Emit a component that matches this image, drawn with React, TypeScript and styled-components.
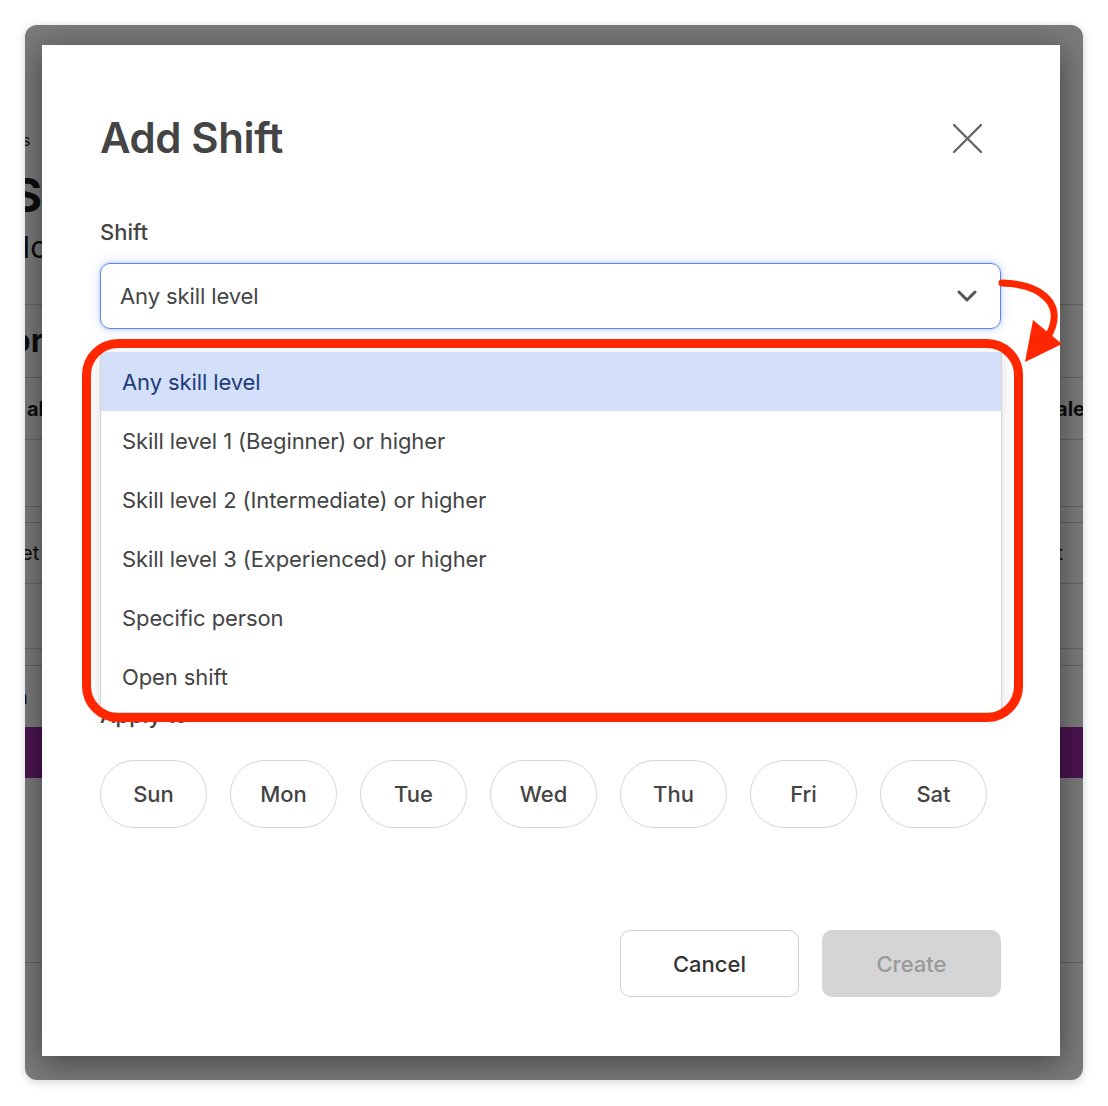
import React from "react";
import styled, { createGlobalStyle } from "styled-components";

const Global = createGlobalStyle`
  html, body { margin: 0; padding: 0; background: #ffffff; }
  body { font-family: Inter, "Noto Sans", "Liberation Sans", sans-serif; }
  * { box-sizing: border-box; }
`;

const Page = styled.div`
  padding: 25px 25px 26px 25px;
`;

const Window = styled.div`
  position: relative;
  height: 1055px;
  border-radius: 12px;
  overflow: hidden;
  background: #ffffff;
  box-shadow: 0 2px 10px rgba(0, 0, 0, 0.18);
`;

/* ---------- dimmed app behind the dialog ---------- */

const AppBehind = styled.div`
  display: flex;
  flex-direction: column;
  color: #1c1c1c;
`;

const BgRow = styled.div<{ $h: number; $line?: boolean; $fill?: string }>`
  display: flex;
  align-items: center;
  height: ${(p) => p.$h}px;
  flex-shrink: 0;
  white-space: nowrap;
  background: ${(p) => p.$fill ?? "transparent"};
  border-bottom: ${(p) => (p.$line ? "1px solid #cfcfcf" : "none")};
`;

const Peek = styled.span<{ $size: number; $bold?: boolean; $shift: number }>`
  font-size: ${(p) => p.$size}px;
  font-weight: ${(p) => (p.$bold ? 700 : 400)};
  margin-left: ${(p) => p.$shift}px;
  line-height: 1;
`;

const PeekRight = styled(Peek)<{ $end: number }>`
  margin-left: auto;
  margin-right: ${(p) => p.$end}px;
`;

/* ---------- overlay + dialog ---------- */

const Overlay = styled.div`
  position: absolute;
  inset: 0;
  background: rgba(0, 0, 0, 0.52);
  display: flex;
  padding: 20px 23px 24px 17px;
`;

const Modal = styled.div`
  position: relative;
  flex: 1;
  background: #ffffff;
  box-shadow: 0 6px 30px rgba(0, 0, 0, 0.45);
  padding: 68px 59px 59px 58px;
  display: flex;
  flex-direction: column;
  color: #444444;
`;

const Header = styled.div`
  display: flex;
  align-items: center;
  justify-content: space-between;
  height: 50px;
`;

const Title = styled.h1`
  margin: 0;
  font-size: 42px;
  font-weight: 600;
  line-height: 50px;
  letter-spacing: -0.4px;
  color: #444444;
`;

const CloseButton = styled.button`
  width: 40px;
  height: 40px;
  margin-right: 14px;
  border: none;
  background: transparent;
  padding: 0;
  display: flex;
  align-items: center;
  justify-content: center;
  cursor: pointer;
`;

const Label = styled.div<{ $top: number }>`
  margin-top: ${(p) => p.$top}px;
  font-size: 22px;
  font-weight: 500;
  line-height: 28px;
  color: #444444;
`;

const SelectWrap = styled.div`
  position: relative;
  margin-top: 17px;
`;

const SelectBox = styled.div`
  height: 66px;
  border: 1px solid #5581fb;
  border-radius: 10px;
  box-shadow: 0 0 0 2px rgba(85, 129, 251, 0.1), 0 0 12px rgba(85, 129, 251, 0.28);
  display: flex;
  align-items: center;
  justify-content: space-between;
  padding: 0 23px 0 19px;
  font-size: 22px;
  letter-spacing: -0.1px;
  color: #454545;
`;

const Menu = styled.div`
  position: absolute;
  top: 89px;
  left: 0;
  width: 902px;
  background: #ffffff;
  border: 1px solid #d4d4d4;
  border-top: none;
  box-shadow: 0 4px 14px rgba(0, 0, 0, 0.14);
  padding-bottom: 6px;
  z-index: 2;
`;

const MenuItem = styled.div<{ $selected?: boolean }>`
  height: 59px;
  display: flex;
  align-items: center;
  padding-left: 21px;
  font-size: 22px;
  letter-spacing: -0.1px;
  color: ${(p) => (p.$selected ? "#1d3b78" : "#444444")};
  background: ${(p) => (p.$selected ? "#d4e0fa" : "transparent")};
`;

const Highlight = styled.div`
  position: absolute;
  left: -18px;
  top: 76px;
  width: 941px;
  height: 383px;
  border: 9px solid #ff2600;
  border-radius: 36px;
  z-index: 3;
  pointer-events: none;
`;

const Arrow = styled.svg`
  position: absolute;
  left: 895px;
  top: 7px;
  z-index: 3;
  overflow: visible;
`;

const HiddenField = styled.div`
  margin-top: 40px;
  display: flex;
  flex-direction: column;
  gap: 17px;
`;

const InputRow = styled.div`
  display: flex;
  gap: 23px;
`;

const Input = styled.div`
  flex: 1 0 auto;
  min-width: 0;
  height: 66px;
  border: 1px solid #cccccc;
  border-radius: 10px;
`;

const Days = styled.div`
  margin-top: 31px;
  display: flex;
  gap: 23px;
`;

const DayPill = styled.button`
  width: 107px;
  height: 68px;
  border: 1px solid #d6d6d6;
  border-radius: 34px;
  background: #ffffff;
  font-family: inherit;
  font-size: 22px;
  font-weight: 500;
  color: #444444;
  padding: 0;
`;

const Actions = styled.div`
  margin-top: 102px;
  display: flex;
  justify-content: flex-end;
  gap: 23px;
`;

const ActionButton = styled.button<{ $primary?: boolean }>`
  width: 179px;
  height: 67px;
  border-radius: 10px;
  border: ${(p) => (p.$primary ? "none" : "1px solid #cfcfcf")};
  background: ${(p) => (p.$primary ? "#d5d5d5" : "#ffffff")};
  color: ${(p) => (p.$primary ? "#999999" : "#333333")};
  font-family: inherit;
  font-size: 22px;
  font-weight: 500;
  padding: 0;
`;

const options = [
  "Any skill level",
  "Skill level 1 (Beginner) or higher",
  "Skill level 2 (Intermediate) or higher",
  "Skill level 3 (Experienced) or higher",
  "Specific person",
  "Open shift",
];

const days = ["Sun", "Mon", "Tue", "Wed", "Thu", "Fri", "Sat"];

export default function App() {
  return (
    <>
      <Global />
      <Page>
        <Window>
          <AppBehind>
            <BgRow $h={104} />
            <BgRow $h={22}>
              <Peek $size={16} $shift={-3}>s</Peek>
            </BgRow>
            <BgRow $h={20} />
            <BgRow $h={48}>
              <Peek $size={46} $bold $shift={-13}>S</Peek>
            </BgRow>
            <BgRow $h={2} />
            <BgRow $h={52}>
              <Peek $size={30} $shift={-17}>Ho</Peek>
            </BgRow>
            <BgRow $h={32} $line />
            <BgRow $h={73} $line>
              <Peek $size={32} $bold $shift={-14}>or</Peek>
            </BgRow>
            <BgRow $h={62} $line>
              <Peek $size={20} $bold $shift={2}>al</Peek>
              <PeekRight $size={20} $bold $shift={0} $end={-2}>ale</PeekRight>
            </BgRow>
            <BgRow $h={67} $line />
            <BgRow $h={16} $line />
            <BgRow $h={61} $line>
              <Peek $size={20} $shift={-4}>et</Peek>
              <PeekRight $size={20} $shift={0} $end={20}>t</PeekRight>
            </BgRow>
            <BgRow $h={65} $line />
            <BgRow $h={17} $line />
            <BgRow $h={61}>
              <Peek $size={20} $shift={-9}>n</Peek>
            </BgRow>
            <BgRow $h={51} $fill="#9b2ba8" />
            <BgRow $h={185} $line />
          </AppBehind>

          <Overlay>
            <Modal>
              <Header>
                <Title>Add Shift</Title>
                <CloseButton aria-label="Close">
                  <svg width="29" height="29" viewBox="0 0 29 29">
                    <path d="M1 1 L28 28 M28 1 L1 28" stroke="#666666" strokeWidth="2.4" strokeLinecap="round" />
                  </svg>
                </CloseButton>
              </Header>

              <Label $top={55}>Shift</Label>
              <SelectWrap>
                <SelectBox>
                  <span>Any skill level</span>
                  <svg width="20" height="12" viewBox="0 0 20 12">
                    <path d="M2 2 L10 10 L18 2" fill="none" stroke="#555555" strokeWidth="3" strokeLinecap="round" strokeLinejoin="round" />
                  </svg>
                </SelectBox>

                <Menu>
                  {options.map((o, i) => (
                    <MenuItem key={o} $selected={i === 0}>
                      {o}
                    </MenuItem>
                  ))}
                </Menu>

                <Highlight />
                <Arrow width="75" height="100" viewBox="0 0 75 100">
                  <path d="M7 13 C 48 14, 72 36, 52 68" fill="none" stroke="#ff2600" strokeWidth="7" strokeLinecap="round" />
                  <polygon points="38,50 67,74 30,92" fill="#ff2600" />
                </Arrow>
              </SelectWrap>

              <HiddenField>
                <Label $top={0}>Time</Label>
                <InputRow>
                  <Input />
                  <Input />
                </InputRow>
              </HiddenField>
              <HiddenField>
                <Label $top={0}>Break</Label>
                <Input />
              </HiddenField>

              <Label $top={70}>Apply to</Label>
              <Days>
                {days.map((d) => (
                  <DayPill key={d}>{d}</DayPill>
                ))}
              </Days>

              <Actions>
                <ActionButton>Cancel</ActionButton>
                <ActionButton $primary disabled>
                  Create
                </ActionButton>
              </Actions>
            </Modal>
          </Overlay>
        </Window>
      </Page>
    </>
  );
}
